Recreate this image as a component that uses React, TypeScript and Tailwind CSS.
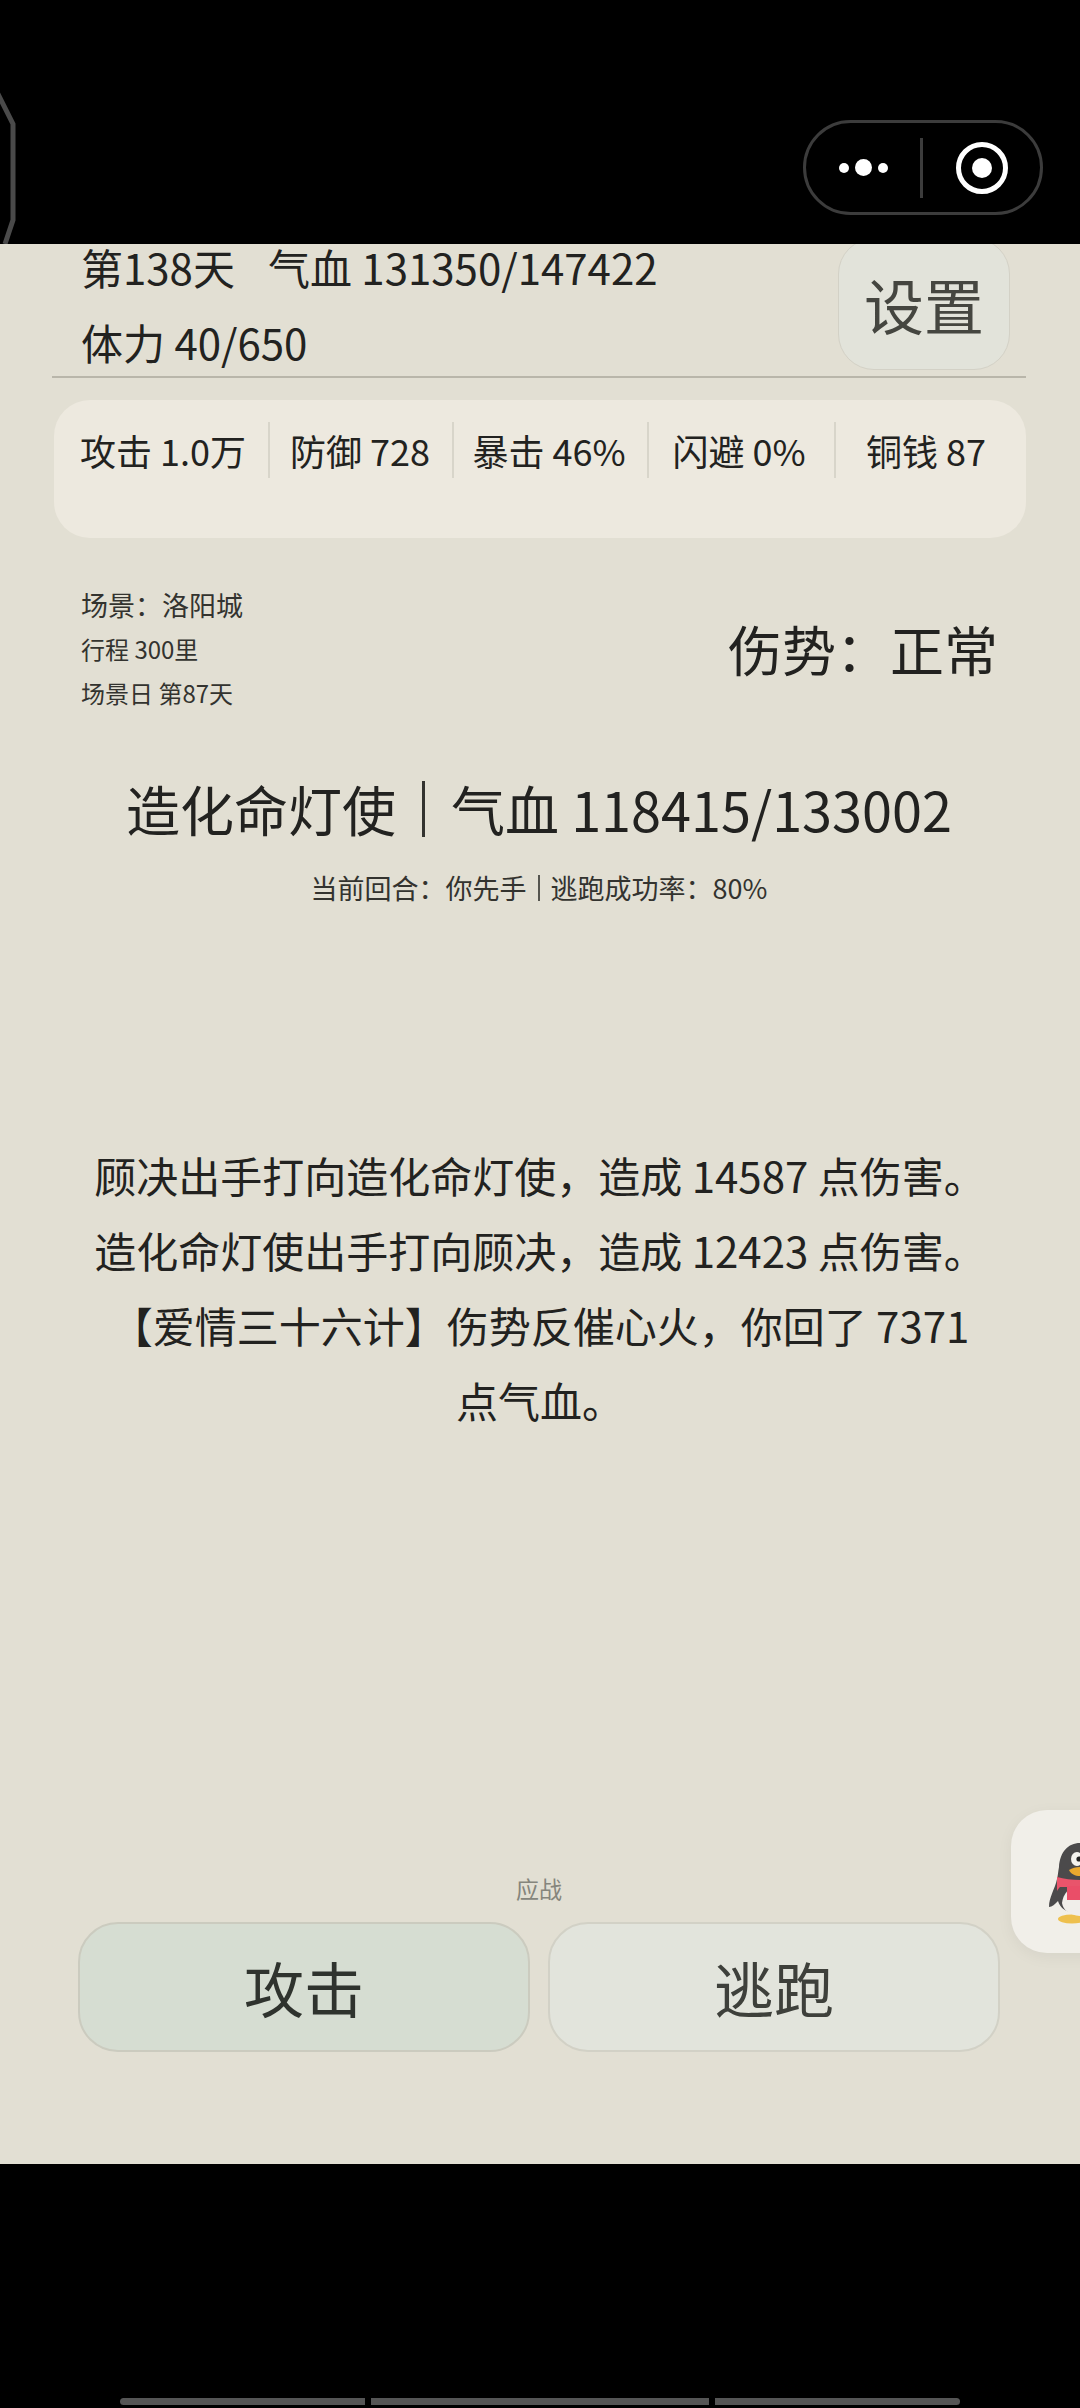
const stats = [
  { label: "攻击 1.0万", cls: "h-[56px] flex items-center justify-center pl-[4px]" },
  { label: "防御 728", cls: "h-[56px] flex items-center justify-center pr-[2px] border-l-2 border-[#d8d5ca]" },
  { label: "暴击 46%", cls: "h-[56px] flex items-center justify-center pr-[3px] border-l-2 border-[#d8d5ca]" },
  { label: "闪避 0%", cls: "h-[56px] flex items-center justify-center pr-[5px] border-l-2 border-[#d8d5ca]" },
  { label: "铜钱 87", cls: "h-[56px] flex items-center justify-center pr-[10px] border-l-2 border-[#d8d5ca]" },
];

const Penguin = () => (
  <svg viewBox="1040 1840 40 90" className="absolute left-[29px] top-[30px] w-[40px] h-[90px]">
    <ellipse cx="1072" cy="1919" rx="14" ry="4.5" fill="#eec04e" />
    <path d="M1080 1843c-12 0-20 9-21 24-1 5-1 8-2 12-2 10-8 18-8 28 3 0 6-3 9-6 2 7 8 12 22 13z" fill="#4b4a4b" />
    <path d="M1080 1886c-11 0-17 8-18 17 1 7 7 12 18 13z" fill="#f0eeea" />
    <ellipse cx="1077" cy="1859" rx="6" ry="7" fill="#f4f3ef" />
    <circle cx="1079" cy="1859" r="2.6" fill="#222222" />
    <path d="M1069 1870c3-2 7-3 11-3v9c-5 0-9-2-11-6z" fill="#eba92e" />
    <path d="M1057 1877c7 2 15 3 23 3v7h-20c-1 1-2 2-3 4z" fill="#e9546b" />
    <rect x="1067" y="1886" width="13" height="14" fill="#ea4e68" />
  </svg>
);

export default function App() {
  return (
    <div className="w-[1080px] h-[2408px] bg-black flex flex-col relative overflow-hidden font-['Noto_Sans_CJK_SC','Noto_Sans',sans-serif] text-[#222220]">
      {/* wechat capsule row */}
      <div className="h-[244px] shrink-0 relative">
        <svg viewBox="0 0 20 160" className="absolute left-0 top-[90px] w-[20px] h-[160px]">
          <path d="M-4 0L13 34V130L5 154" fill="none" stroke="#4a4a4a" strokeWidth="5" />
        </svg>
        <div className="absolute left-[803px] top-[120px] w-[240px] h-[95px] rounded-full border-[3px] border-[#3c3c3c] flex items-center">
          <div className="w-[114px] flex items-center justify-center gap-[6px]">
            <span className="w-[10px] h-[10px] rounded-full bg-white" />
            <span className="w-[17px] h-[17px] rounded-full bg-white" />
            <span className="w-[10px] h-[10px] rounded-full bg-white" />
          </div>
          <div className="w-[3px] h-[60px] bg-[#3c3c3c]" />
          <div className="flex-1 flex items-center justify-center">
            <div className="w-[52px] h-[52px] rounded-full border-[5px] border-white flex items-center justify-center">
              <div className="w-[20px] h-[20px] rounded-full bg-white" />
            </div>
          </div>
        </div>
      </div>

      <main className="h-[1920px] shrink-0 bg-[#e2dfd3] relative overflow-hidden">
        <header className="ml-[52px] mr-[54px] h-[134px] border-b-2 border-[#b9b6aa] flex justify-between pl-[29px] pr-[16px]">
          <div className="text-[42px]">
            <div className="flex gap-[33px] leading-[46px]">
              <span>第138天</span>
              <span>气血 131350/147422</span>
            </div>
            <div className="leading-[75px] mt-[14px]">体力 40/650</div>
          </div>
          <button className="w-[172px] h-[132px] -mt-[6px] rounded-[36px] bg-[#e2e3da] border border-[#d3d1c6] text-[60px] text-[#454640] flex items-center justify-center">
            设置
          </button>
        </header>

        <section className="ml-[54px] mr-[54px] mt-[22px] h-[138px] rounded-[36px] bg-[#ede9df] pt-[22px]">
          <div className="grid grid-cols-[214px_184px_195px_187px_192px] text-[36px]">
            {stats.map((s) => (
              <div key={s.label} className={s.cls}>
                {s.label}
              </div>
            ))}
          </div>
        </section>

        <section className="mt-[45px] pl-[81px] pr-[82px] flex items-center justify-between">
          <div className="text-[27px] leading-[44px] text-[#33332f]">
            <div>场景：洛阳城</div>
            <div className="text-[24px]">行程 300里</div>
            <div className="text-[24px]">场景日 第87天</div>
          </div>
          <div className="text-[54px] leading-[70px]">伤势：正常</div>
        </section>

        <section className="mt-[59px] pr-[2px] flex items-center justify-center text-[54px] leading-[70px]">
          <span>造化命灯使</span>
          <span className="w-[3px] h-[56px] bg-[#33332f] mx-[26px]" />
          <span>气血 118415/133002</span>
        </section>

        <section className="mt-[24px] pr-[2px] flex items-center justify-center text-[27px] leading-[40px] text-[#33332f]">
          <span>当前回合：你先手</span>
          <span className="w-[2px] h-[26px] bg-[#55554f] mx-[11px]" />
          <span>逃跑成功率：80%</span>
        </section>

        <section className="mt-[229px] mx-auto w-[900px] text-center text-[42px] leading-[75px]">
          <p>顾决出手打向造化命灯使，造成 14587 点伤害。</p>
          <p>造化命灯使出手打向顾决，造成 12423 点伤害。</p>
          <p>【爱情三十六计】伤势反催心火，你回了 7371 点气血。</p>
        </section>

        <section className="absolute left-0 right-0 bottom-[112px] pl-[78px]">
          <div className="w-[922px] text-center text-[23px] leading-[40px] text-[#85857c] mb-[14px]">应战</div>
          <div className="grid grid-cols-2 gap-[18px] w-[922px]">
            <button className="h-[130px] rounded-[40px] bg-[#d6ddd2] border-2 border-[#cbcbbf] text-[60px] text-[#2f332e]">攻击</button>
            <button className="h-[130px] rounded-[40px] bg-[#e2e4dc] border-2 border-[#d2d1c6] text-[60px] text-[#3e403b]">逃跑</button>
          </div>
        </section>

        <div className="absolute left-[1011px] top-[1566px] w-[110px] h-[143px] rounded-[36px] bg-[#f1efe9] shadow-[0_4px_16px_rgba(0,0,0,0.05)]">
          <Penguin />
        </div>
      </main>

      <div className="flex-1 flex items-end justify-center pb-[3px]">
        <div className="flex gap-[6px] h-[7px]">
          <div className="w-[245px] bg-[#555555] rounded-l-full" />
          <div className="w-[338px] bg-[#555555]" />
          <div className="w-[245px] bg-[#555555] rounded-r-full" />
        </div>
      </div>
    </div>
  );
}
